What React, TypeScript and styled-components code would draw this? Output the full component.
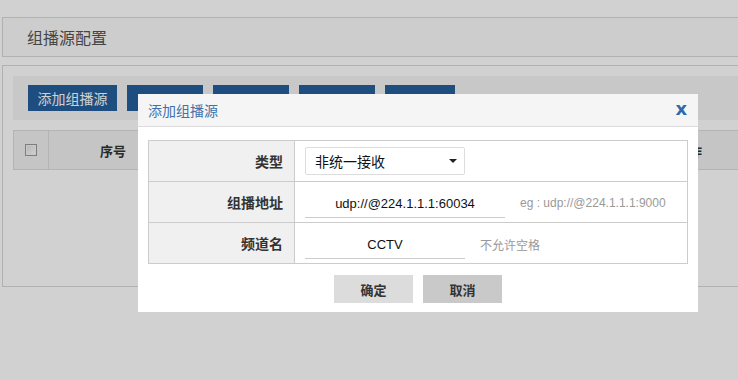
import React from "react";
import styled, { createGlobalStyle } from "styled-components";

const Global = createGlobalStyle`
  html, body { margin: 0; padding: 0; height: 100%; background: #ffffff; overflow: hidden; }
  body { font-family: "Liberation Sans", "Noto Sans CJK SC", sans-serif; color: #333; }
`;

const Page = styled.div`
  width: 760px;
  padding: 17px 0 0 2px;
  display: flex;
  flex-direction: column;
  gap: 8px;
`;

const TitleBox = styled.div`
  height: 38px;
  border: 1px solid #d8d8d8;
  background: #fbfbfb;
  display: flex;
  align-items: center;
  padding-left: 24px;
  font-size: 16px;
  color: #555;
`;

const MainBox = styled.div`
  height: 200px;
  border: 1px solid #d8d8d8;
  padding: 10px;
  display: flex;
  flex-direction: column;
  gap: 10px;
`;

const Toolbar = styled.div`
  height: 44px;
  background: #f4f4f4;
  display: flex;
  align-items: center;
  gap: 10px;
  padding-left: 15px;
`;

const ToolButton = styled.div<{ $w: number }>`
  width: ${(p) => p.$w}px;
  height: 26px;
  background: #25609c;
  color: #fff;
  font-size: 14px;
  display: flex;
  align-items: center;
  justify-content: center;
`;

const HeadRow = styled.div`
  height: 38px;
  border: 1px solid #dcdcdc;
  background: #f1f1f1;
  display: grid;
  grid-template-columns: 35px 128px 1fr 122px;
  align-items: stretch;
  font-size: 13px;
  font-weight: bold;
  color: #333;
`;

const HeadCell = styled.div<{ $border?: boolean }>`
  display: flex;
  align-items: center;
  justify-content: center;
  border-right: ${(p) => (p.$border ? "1px solid #dcdcdc" : "none")};
`;

const Check = styled.span`
  width: 10px;
  height: 10px;
  border: 1px solid #9a9a9a;
  background: linear-gradient(135deg, #e0e0e0, #ffffff);
  box-shadow: inset 0 0 0 1px #f4f4f4;
`;

const Mask = styled.div`
  position: fixed;
  inset: 0;
  background: rgba(0, 0, 0, 0.18);
`;

const Modal = styled.div`
  position: fixed;
  left: 138px;
  top: 94px;
  width: 560px;
  height: 218px;
  background: #fff;
  display: flex;
  flex-direction: column;
`;

const ModalHead = styled.div`
  height: 32px;
  background: #f5f5f5;
  border-bottom: 1px solid #dddddd;
  display: flex;
  align-items: center;
  justify-content: space-between;
  padding: 0 11px 0 10px;
`;

const ModalTitle = styled.span`
  font-size: 14px;
  color: #3d72ad;
`;

const Close = styled.span`
  font-family: "DejaVu Sans", sans-serif;
  font-weight: bold;
  font-size: 18px;
  color: #2f6aa8;
  line-height: 1;
  margin-top: -3px;
`;

const ModalBody = styled.div`
  padding: 13px 10px 0 10px;
  display: flex;
  flex-direction: column;
  gap: 11px;
`;

const Form = styled.div`
  border: 1px solid #cccccc;
  display: grid;
  grid-template-columns: 146px 1fr;
`;

const Label = styled.div<{ $last?: boolean }>`
  height: 40px;
  background: #f0f0f0;
  border-right: 1px solid #cccccc;
  border-bottom: ${(p) => (p.$last ? "none" : "1px solid #cccccc")};
  display: flex;
  align-items: center;
  justify-content: flex-end;
  padding-right: 11px;
  font-size: 14px;
  font-weight: bold;
  color: #333;
`;

const Field = styled.div<{ $last?: boolean }>`
  height: 40px;
  border-bottom: ${(p) => (p.$last ? "none" : "1px solid #cccccc")};
  display: flex;
  align-items: center;
  padding-left: 10px;
  gap: 15px;
`;

const Select = styled.div`
  border: 1px solid #dddddd;
  border-radius: 2px;
  display: flex;
  align-items: center;
  justify-content: space-between;
  padding: 0 7px 0 9px;
  box-sizing: border-box;
  width: 160px;
  height: 28px;
  font-size: 14px;
  color: #111;
`;

const Caret = styled.span`
  width: 0;
  height: 0;
  border-left: 4px solid transparent;
  border-right: 4px solid transparent;
  border-top: 4px solid #222;
`;

const Input = styled.div<{ $w: number }>`
  width: ${(p) => p.$w}px;
  height: 28px;
  border-bottom: 1px solid #cccccc;
  display: flex;
  align-items: center;
  justify-content: center;
  font-size: 13px;
  color: #111;
  box-sizing: border-box;
  margin-top: 4px;
`;

const Hint = styled.span`
  font-size: 12px;
  color: #999;
  margin-top: 2px;
`;

const Actions = styled.div`
  display: flex;
  justify-content: center;
  gap: 10px;
`;

const ActionButton = styled.div<{ $bg: string }>`
  width: 79px;
  height: 28px;
  background: ${(p) => p.$bg};
  display: flex;
  align-items: center;
  justify-content: center;
  font-size: 13px;
  font-weight: bold;
  color: #333;
`;

export default function App() {
  return (
    <>
      <Global />
      <Page>
        <TitleBox>组播源配置</TitleBox>
        <MainBox>
          <Toolbar>
            <ToolButton $w={89}>添加组播源</ToolButton>
            <ToolButton $w={76} />
            <ToolButton $w={76} />
            <ToolButton $w={76} />
            <ToolButton $w={70} />
          </Toolbar>
          <HeadRow>
            <HeadCell $border>
              <Check />
            </HeadCell>
            <HeadCell>序号</HeadCell>
            <HeadCell />
            <HeadCell>操作</HeadCell>
          </HeadRow>
        </MainBox>
      </Page>
      <Mask />
      <Modal>
        <ModalHead>
          <ModalTitle>添加组播源</ModalTitle>
          <Close>x</Close>
        </ModalHead>
        <ModalBody>
          <Form>
            <Label>类型</Label>
            <Field>
              <Select>
                <span>非统一接收</span>
                <Caret />
              </Select>
            </Field>
            <Label>组播地址</Label>
            <Field>
              <Input $w={200}>udp://@224.1.1.1:60034</Input>
              <Hint>eg : udp://@224.1.1.1:9000</Hint>
            </Field>
            <Label $last>频道名</Label>
            <Field $last>
              <Input $w={160}>CCTV</Input>
              <Hint>不允许空格</Hint>
            </Field>
          </Form>
          <Actions>
            <ActionButton $bg="#dcdcdc">确定</ActionButton>
            <ActionButton $bg="#c9c9c9">取消</ActionButton>
          </Actions>
        </ModalBody>
      </Modal>
    </>
  );
}
